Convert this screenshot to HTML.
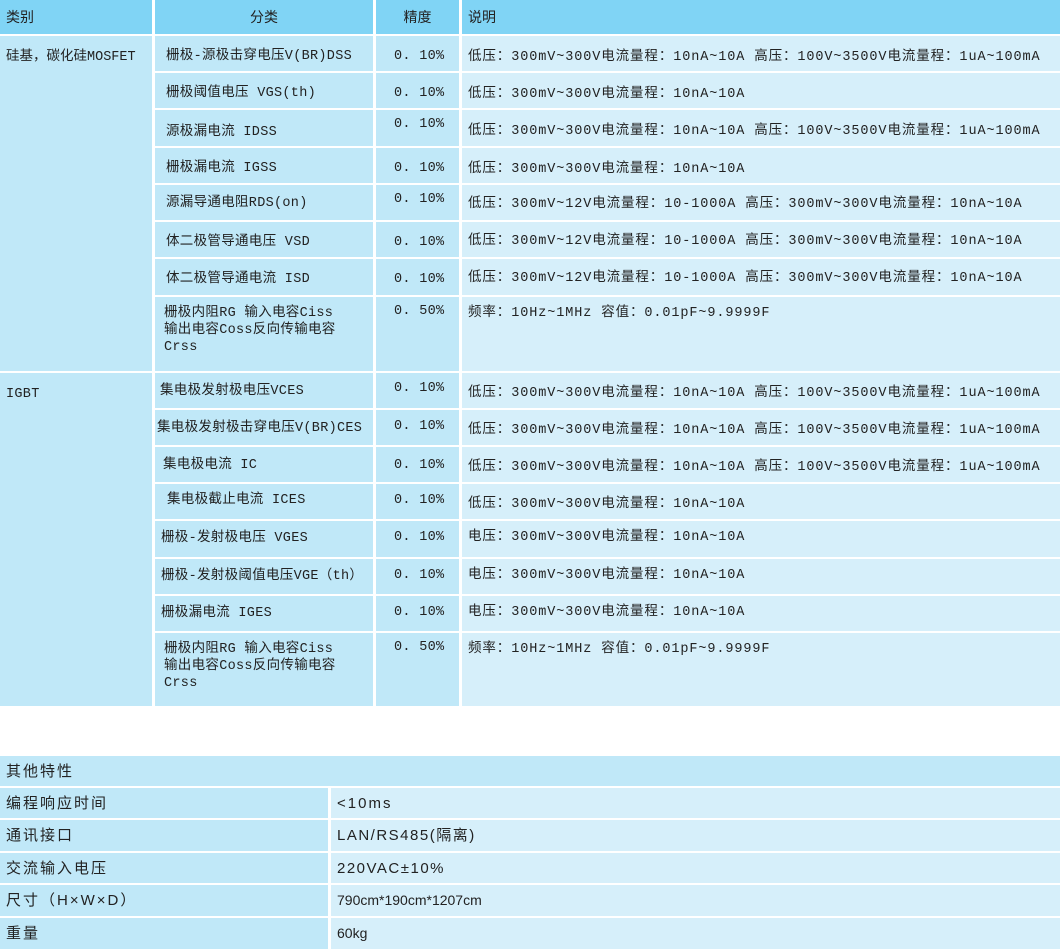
<!DOCTYPE html>
<html><head><meta charset="utf-8"><style>
body{margin:0;width:1060px;height:951px;background:#fff;position:relative;overflow:hidden;font-family:"Liberation Sans","Noto Sans CJK SC",sans-serif;font-size:13px;color:#222}
.c{position:absolute;box-sizing:border-box;padding:0 6px;line-height:17px}
.h{background:#80d4f5;font-size:14px}
.a{background:#c0e8f8}
.b{background:#d6effa}
.m{font-family:"Liberation Mono","Noto Sans CJK SC",monospace;font-size:13.5px;letter-spacing:0.3px}
.w{letter-spacing:0.9px}
.t{font-size:15px;letter-spacing:2px}
</style></head><body>
<div class="c h" style="left:0;top:0;width:152px;height:34px;padding-top:9px">类别</div>
<div class="c h" style="left:155px;top:0;width:218px;height:34px;padding-top:9px;text-align:center">分类</div>
<div class="c h" style="left:376px;top:0;width:83px;height:34px;padding-top:9px;text-align:center">精度</div>
<div class="c h" style="left:462px;top:0;width:598px;height:34px;padding-top:9px">说明</div>

<div class="c a m" style="left:0;top:36px;width:152px;height:335px;padding-top:13px;letter-spacing:0">硅基，碳化硅MOSFET</div>
<div class="c a m" style="left:0;top:373px;width:152px;height:333px;padding-top:13px">IGBT</div>

<div id="rows"></div>
<script>
var R=[
[36,35,"栅极-源极击穿电压V(BR)DSS","0. 10%","低压：300mV~300V电流量程：10nA~10A  高压：100V~3500V电流量程：1uA~100mA",12,13,12,11],
[73,35,"栅极阈值电压 VGS(th)","0. 10%","低压：300mV~300V电流量程：10nA~10A",12,13,12,11],
[110,36,"源极漏电流 IDSS","0. 10%","低压：300mV~300V电流量程：10nA~10A  高压：100V~3500V电流量程：1uA~100mA",6,13,14,11],
[148,35,"栅极漏电流 IGSS","0. 10%","低压：300mV~300V电流量程：10nA~10A",12,13,12,11],
[185,35,"源漏导通电阻RDS(on)","0. 10%","低压：300mV~12V电流量程：10-1000A   高压：300mV~300V电流量程：10nA~10A",6,11,10,11],
[222,35,"体二极管导通电压 VSD","0. 10%","低压：300mV~12V电流量程：10-1000A   高压：300mV~300V电流量程：10nA~10A",12,11,12,11],
[259,36,"体二极管导通电流 ISD","0. 10%","低压：300mV~12V电流量程：10-1000A   高压：300mV~300V电流量程：10nA~10A",12,11,12,11],
[297,74,"栅极内阻RG 输入电容Ciss<br>输出电容Coss反向传输电容<br>Crss","0. 50%","频率：10Hz~1MHz 容值：0.01pF~9.9999F",6,8,8,9],
[373,35,"集电极发射极电压VCES","0. 10%","低压：300mV~300V电流量程：10nA~10A  高压：100V~3500V电流量程：1uA~100mA",7,12,10,5],
[410,35,"集电极发射极击穿电压V(BR)CES","0. 10%","低压：300mV~300V电流量程：10nA~10A  高压：100V~3500V电流量程：1uA~100mA",8,12,10,2],
[447,35,"集电极电流 IC","0. 10%","低压：300mV~300V电流量程：10nA~10A  高压：100V~3500V电流量程：1uA~100mA",10,12,10,8],
[484,35,"集电极截止电流 ICES","0. 10%","低压：300mV~300V电流量程：10nA~10A",8,12,8,12],
[521,36,"栅极-发射极电压 VGES","0. 10%","电压：300mV~300V电流量程：10nA~10A",8,8,9,6],
[559,35,"栅极-发射极阈值电压VGE（th）","0. 10%","电压：300mV~300V电流量程：10nA~10A",8,8,9,6],
[596,35,"栅极漏电流 IGES","0. 10%","电压：300mV~300V电流量程：10nA~10A",8,8,9,6],
[633,73,"栅极内阻RG 输入电容Ciss<br>输出电容Coss反向传输电容<br>Crss","0. 50%","频率：10Hz~1MHz 容值：0.01pF~9.9999F",6,8,8,9]
];
var h="";
R.forEach(function(r){
var t=r[0],ht=r[1];
h+='<div class="c a m" style="left:155px;top:'+t+'px;width:218px;height:'+ht+'px;padding-top:'+r[7]+'px;padding-left:'+r[8]+'px">'+r[2]+'</div>';
h+='<div class="c a m" style="left:376px;top:'+t+'px;width:83px;height:'+ht+'px;padding-top:'+r[5]+'px;padding-left:18px">'+r[3]+'</div>';
h+='<div class="c b m w" style="left:462px;top:'+t+'px;width:598px;height:'+ht+'px;padding-top:'+r[6]+'px">'+r[4]+'</div>';
});
document.getElementById("rows").innerHTML=h;
</script>

<div class="c a t" style="left:0;top:756px;width:1060px;height:30px;padding-top:7px">其他特性</div>
<div class="c a t" style="left:0;top:788px;width:328px;height:30px;padding-top:7px">编程响应时间</div>
<div class="c b t" style="left:331px;top:788px;width:729px;height:30px;padding-top:7px">&lt;10ms</div>
<div class="c a t" style="left:0;top:820px;width:328px;height:31px;padding-top:7px">通讯接口</div>
<div class="c b t" style="left:331px;top:820px;width:729px;height:31px;padding-top:7px;letter-spacing:1.5px">LAN/RS485(隔离)</div>
<div class="c a t" style="left:0;top:853px;width:328px;height:30px;padding-top:7px">交流输入电压</div>
<div class="c b t" style="left:331px;top:853px;width:729px;height:30px;padding-top:7px;letter-spacing:1.5px">220VAC±10%</div>
<div class="c a t" style="left:0;top:885px;width:328px;height:31px;padding-top:7px">尺寸（H×W×D）</div>
<div class="c b" style="left:331px;top:885px;width:729px;height:31px;padding-top:7px;font-size:14px">790cm*190cm*1207cm</div>
<div class="c a t" style="left:0;top:918px;width:328px;height:31px;padding-top:7px">重量</div>
<div class="c b" style="left:331px;top:918px;width:729px;height:31px;padding-top:7px;font-size:14px">60kg</div>
</body></html>
